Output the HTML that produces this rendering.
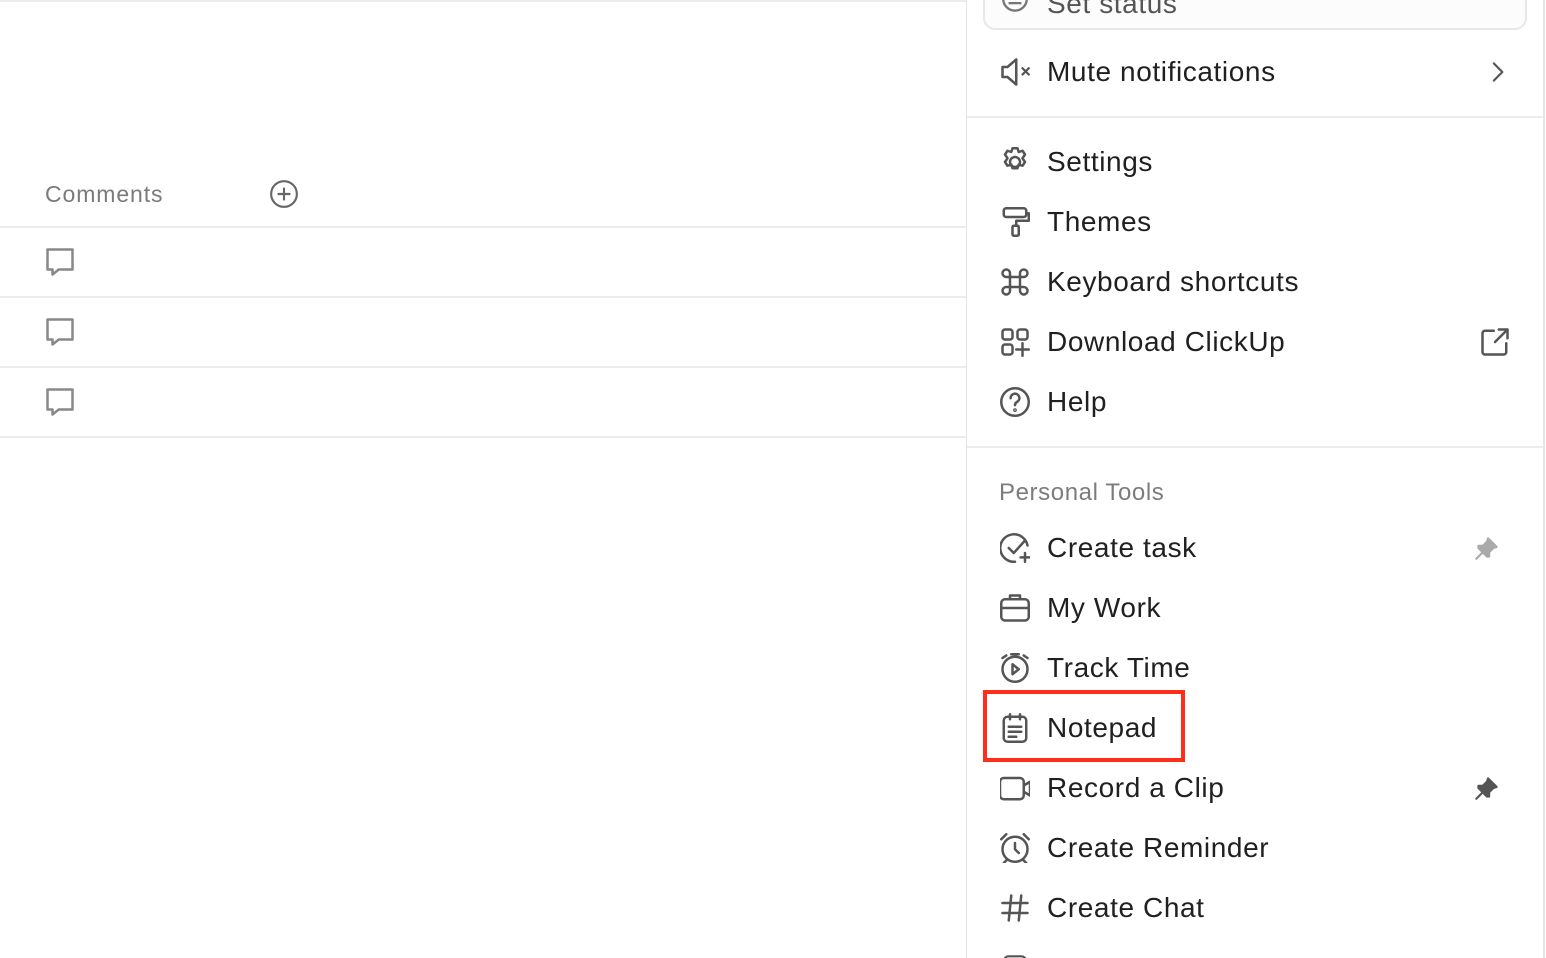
<!DOCTYPE html><html><head><style>
html,body{margin:0;width:1546px;height:958px;overflow:hidden}
body{background:#fff;font-family:"Liberation Sans",sans-serif;position:relative}
.a{position:absolute}
.hl{position:absolute;left:0;width:966px;height:2px;background:#ededed}
.cm{position:absolute;left:45px;width:30px;height:30px}
.panel{position:absolute;left:966px;top:0;width:576px;height:958px;border-left:1px solid #e6e6e6;border-right:2px solid #e6e6e6;background:#fff;overflow:hidden}
.row{position:absolute;left:0;width:576px;height:60px}
.row span{position:absolute;left:80px;top:50%;transform:translateY(-50%);font-size:28px;color:#202020;white-space:nowrap;letter-spacing:0.6px}
.row svg{position:absolute;left:33px;top:15px;width:30px;height:30px;fill:none;stroke:#555;stroke-width:2;stroke-linecap:round;stroke-linejoin:round}
.sep{position:absolute;left:0;width:576px;height:2px;background:#ededed}
</style></head><body>
<div class="hl" style="top:0;height:2px"></div>
<div class="a" style="left:45px;top:181px;font-size:23px;color:#7a7a7a;letter-spacing:0.9px">Comments</div>
<svg class="a" style="left:269px;top:179px" width="30" height="30" viewBox="0 0 28 28" fill="none" stroke="#666" stroke-width="2"><circle cx="14" cy="14" r="12"/><path d="M14 8v12M8 14h12"/></svg>
<div class="hl" style="top:226px"></div>
<div class="hl" style="top:296px"></div>
<div class="hl" style="top:366px"></div>
<div class="hl" style="top:436px"></div>
<svg class="cm" style="top:247px" viewBox="2 2 24 24" fill="none" stroke="#888" stroke-width="2" stroke-linejoin="round"><path d="M4 4h20v16h-11l-5 4v-4h-4z"/></svg>
<svg class="cm" style="top:317px" viewBox="2 2 24 24" fill="none" stroke="#888" stroke-width="2" stroke-linejoin="round"><path d="M4 4h20v16h-11l-5 4v-4h-4z"/></svg>
<svg class="cm" style="top:387px" viewBox="2 2 24 24" fill="none" stroke="#888" stroke-width="2" stroke-linejoin="round"><path d="M4 4h20v16h-11l-5 4v-4h-4z"/></svg>

<div class="panel">
<div class="a" style="left:16px;top:-20px;width:540px;height:46px;border:2px solid #e8e8e8;border-radius:12px;background:#fcfcfc"></div>
<div class="a" style="left:80px;top:-12px;font-size:28px;color:#555;letter-spacing:0.6px">Set status</div>
<svg class="a" style="left:33px;top:-14px" width="30" height="30" viewBox="0 0 28 28" fill="none" stroke="#777" stroke-width="2.2"><circle cx="14" cy="12" r="11"/><path d="M8 16h12"/></svg>

<div class="row" style="top:42px"><svg viewBox="2 2 24 24"><path d="M4 10h4l7-6v20l-7-6h-4z"/><path d="M20 11l5 5M25 11l-5 5" stroke-width="1.8"/></svg><span>Mute notifications</span>
<svg viewBox="0 0 28 28" style="left:515px"><path d="M11 6l8 8-8 8"/></svg></div>
<div class="sep" style="top:116px"></div>

<div class="row" style="top:132px"><svg viewBox="2 2 24 24"><circle cx="14" cy="14" r="4"/><path d="M12 3h4l1 3 3-1 2 3-2 3 2 3-2 3-3-1-1 3h-4l-1-3-3 1-2-3 2-3-2-3 2-3 3 1z"/></svg><span>Settings</span></div>
<div class="row" style="top:192px"><svg viewBox="2 2 24 24"><rect x="5" y="3" width="18" height="7" rx="2"/><path d="M23 7h2v6h-10v4"/><rect x="12" y="17" width="5" height="8" rx="1"/></svg><span>Themes</span></div>
<div class="row" style="top:252px"><svg viewBox="2 2 24 24"><path d="M10 10h8v8h-8z"/><path d="M10 10v-3a3 3 0 1 0-3 3zM18 10v-3a3 3 0 1 1 3 3zM10 18v3a3 3 0 1 1-3-3zM18 18v3a3 3 0 1 0 3-3z"/></svg><span>Keyboard shortcuts</span></div>
<div class="row" style="top:312px"><svg viewBox="2 2 24 24"><rect x="4" y="4" width="8" height="8" rx="2"/><rect x="16" y="4" width="8" height="8" rx="2"/><rect x="4" y="16" width="8" height="8" rx="2"/><path d="M20 15v10M15 20h10"/></svg><span>Download ClickUp</span>
<svg viewBox="2 2 24 24" style="left:513px"><path d="M13 5h-7a2 2 0 0 0-2 2v15a2 2 0 0 0 2 2h15a2 2 0 0 0 2-2v-7"/><path d="M17 4h7v7M24 4l-10 10"/></svg></div>
<div class="row" style="top:372px"><svg viewBox="2 2 24 24"><circle cx="14" cy="14" r="11"/><path d="M10.5 11a3.5 3.5 0 1 1 5 3c-1 .6-1.5 1.2-1.5 2.5"/><circle cx="14" cy="20.5" r=".5"/></svg><span>Help</span></div>
<div class="sep" style="top:446px"></div>

<div class="a" style="left:32px;top:479px;font-size:24px;color:#7c7c7c;letter-spacing:0.6px">Personal Tools</div>
<div class="row" style="top:518px"><svg viewBox="2 2 24 24"><path d="M24 12a11 11 0 1 0-10 13"/><path d="M9 14l4 4 9-10"/><path d="M22 18v7M18.5 21.5h7"/></svg><span>Create task</span>
<svg viewBox="0 0 28 28" style="left:505px;fill:#aaa;stroke:#aaa"><path d="M15 5l8 8-3 1-4 4 0 4-2 0-8-8 0-2 4 0 4-4z"/><path d="M9 19l-5 5"/></svg></div>
<div class="row" style="top:578px"><svg viewBox="2 2 24 24"><rect x="3" y="7" width="22" height="17" rx="3"/><path d="M10 7v-3h8v3M3 14h22"/></svg><span>My Work</span></div>
<div class="row" style="top:638px"><svg viewBox="2 2 24 24"><circle cx="14" cy="15" r="10"/><path d="M12 11l5 4-5 4z"/><path d="M11 3h6M4 6l3-2M24 6l-3-2"/></svg><span>Track Time</span></div>
<div class="row" style="top:698px"><svg viewBox="2 2 24 24"><rect x="5" y="5" width="18" height="20" rx="3"/><path d="M10 3v4M18 3v4M9 13h10M9 17h10M9 21h6"/></svg><span>Notepad</span></div>
<div class="a" style="left:16px;top:690px;width:202px;height:72px;border:4px solid #ff2d1a;box-sizing:border-box"></div>
<div class="row" style="top:758px"><svg viewBox="2 2 24 24"><rect x="2" y="6" width="19" height="17" rx="3"/><path d="M21 12l5-3v11l-5-3"/></svg><span>Record a Clip</span>
<svg viewBox="0 0 28 28" style="left:505px;fill:#555;stroke:#555"><path d="M15 5l8 8-3 1-4 4 0 4-2 0-8-8 0-2 4 0 4-4z"/><path d="M9 19l-5 5"/></svg></div>
<div class="row" style="top:818px"><svg viewBox="2 2 24 24"><circle cx="14" cy="15" r="10"/><path d="M14 10v5l3 3M3 7l4-4M25 7l-4-4M7 24l-2 2M21 24l2 2"/></svg><span>Create Reminder</span></div>
<div class="row" style="top:878px"><svg viewBox="2 2 24 24"><path d="M11 4l-2 20M19 4l-2 20M4 10h20M4 18h20"/></svg><span>Create Chat</span></div>
<svg class="a" style="left:33px;top:952px" width="30" height="30" viewBox="0 0 28 28" fill="none" stroke="#555" stroke-width="2"><rect x="4" y="4" width="20" height="20" rx="4"/></svg>
</div>
</body></html>
